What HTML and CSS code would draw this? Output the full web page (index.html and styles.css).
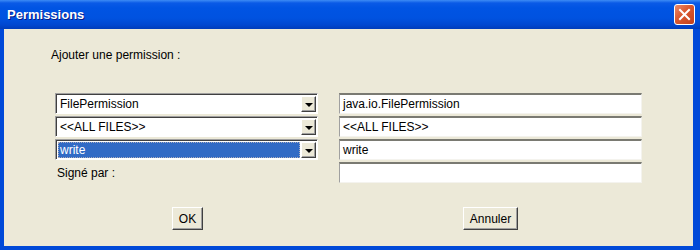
FILE: index.html
```html
<!DOCTYPE html>
<html lang="fr">
<head>
    <meta charset="UTF-8">
    <title>Permissions</title>
    <link rel="stylesheet" href="styles.css">
</head>
<body>
    <div class="window">
        <div class="titlebar">
            <span class="title">Permissions</span>
            <div class="close-btn">
                <svg width="13" height="13" viewBox="0 0 13 13">
                    <path d="M2 2 L11 11 M11 2 L2 11" stroke="#fff" stroke-width="2" stroke-linecap="square"/>
                </svg>
            </div>
        </div>
        <div class="content">
            <div class="intro">Ajouter une permission :</div>

            <div class="form">
                <div class="combo">
                    <span class="combo-text">FilePermission</span>
                    <span class="arrow-btn"><span class="arrow"></span></span>
                </div>
                <div class="field">java.io.FilePermission</div>

                <div class="combo">
                    <span class="combo-text">&lt;&lt;ALL FILES&gt;&gt;</span>
                    <span class="arrow-btn"><span class="arrow"></span></span>
                </div>
                <div class="field">&lt;&lt;ALL FILES&gt;&gt;</div>

                <div class="combo">
                    <span class="combo-text selected">write</span>
                    <span class="arrow-btn"><span class="arrow"></span></span>
                </div>
                <div class="field">write</div>

                <div class="label">Signé par :</div>
                <div class="field"></div>
            </div>

            <div class="buttons">
                <button class="btn btn-ok">OK</button>
                <button class="btn btn-cancel">Annuler</button>
            </div>
        </div>
    </div>
</body>
</html>
```

FILE: styles.css
```css
body {
    margin: 0;
    font-family: "Liberation Sans", Arial, sans-serif;
    font-size: 12px;
    color: #000;
}

.window {
    width: 700px;
    height: 250px;
    box-sizing: border-box;
    background: #0049d8;
    padding: 0 7px 4px 4px;
    display: flex;
    flex-direction: column;
}

/* title bar spans the full width, over the frame */
.titlebar {
    height: 29px;
    margin: 0 -7px 0 -4px;
    padding: 0 5px 0 7px;
    display: flex;
    align-items: center;
    justify-content: space-between;
    background: linear-gradient(to bottom, #3d8cf5 0px, #0a5ae6 3px, #0054e3 8px, #0052e0 18px, #0047d0 25px, #003cba 29px);
}

.title {
    color: #fff;
    font-weight: bold;
    font-size: 13px;
    text-shadow: 1px 1px 0 #0a1a83;
}

.close-btn {
    width: 21px;
    height: 21px;
    box-sizing: border-box;
    border: 1px solid #fff;
    border-radius: 3px;
    background: linear-gradient(135deg, #eb8b6c 0%, #d9582f 45%, #c3401c 100%);
    display: flex;
    align-items: center;
    justify-content: center;
}

.content {
    flex: 1;
    background: #ece9d8;
    display: flex;
    flex-direction: column;
}

.intro {
    margin: 19px 0 0 47px;
    height: 14px;
    line-height: 14px;
}

.form {
    margin: 31px 0 0 51px;
    display: grid;
    grid-template-columns: 263px 303px;
    grid-auto-rows: 21px;
    column-gap: 21px;
    row-gap: 2px;
}

.combo {
    display: flex;
    box-sizing: border-box;
    border-top: 1px solid #7f9db9;
    border-left: 1px solid #7f9db9;
    border-right: 1px solid #fff;
    border-bottom: 1px solid #fff;
    box-shadow: inset 1px 1px 0 #404040;
    background: #fff;
    padding: 2px 1px 1px 2px;
}

.combo {
    border-top-color: #a0a0a0;
    border-left-color: #a0a0a0;
}

.combo-text {
    flex: 1;
    display: flex;
    align-items: center;
    padding-left: 2px;
    white-space: nowrap;
}

.combo-text.selected {
    background: #316ac5;
    color: #fff;
    outline: 1px dotted #aab;
    outline-offset: -1px;
    margin-right: 1px;
}

.arrow-btn {
    width: 15px;
    box-sizing: border-box;
    background: #ece9d8;
    border-top: 1px solid #fff;
    border-left: 1px solid #fff;
    border-right: 1px solid #404040;
    border-bottom: 1px solid #404040;
    box-shadow: inset -1px -1px 0 #a0a0a0;
    display: flex;
    align-items: center;
    justify-content: center;
}

.arrow {
    width: 0;
    height: 0;
    border-left: 4px solid transparent;
    border-right: 4px solid transparent;
    border-top: 4px solid #000;
    margin-top: 1px;
}

.field {
    box-sizing: border-box;
    background: #fff;
    border-top: 2px solid #7a7a72;
    border-left: 1px solid #a0a0a0;
    border-right: 1px solid #f4f3ee;
    border-bottom: 1px solid #f4f3ee;
    padding: 0 3px;
    display: flex;
    align-items: center;
    white-space: nowrap;
}

.label {
    padding-left: 2px;
    display: flex;
    align-items: center;
}

.buttons {
    margin: 24px 0 0 168px;
    display: flex;
    gap: 260px;
}

.btn {
    height: 23px;
    padding: 0 5px;
    font-family: "Liberation Sans", Arial, sans-serif;
    font-size: 12px;
    background: #ece9d8;
    border-top: 1px solid #fff;
    border-left: 1px solid #fff;
    border-right: 1px solid #404040;
    border-bottom: 1px solid #404040;
    box-shadow: inset -1px -1px 0 #a0a0a0;
    border-radius: 0;
}

.btn-ok {
    width: 31px;
}

.btn-cancel {
    width: 55px;
}
```
